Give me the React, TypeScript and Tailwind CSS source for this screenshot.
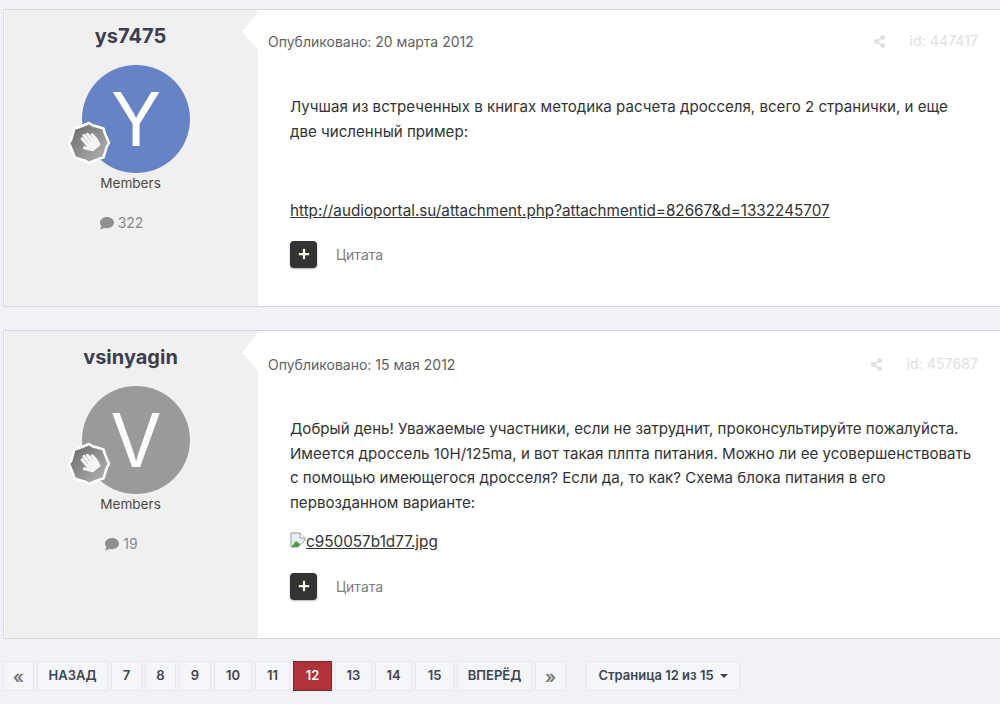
import { FaComment, FaHandPaper, FaPlus, FaShareAlt } from 'react-icons/fa'

const posts = [
  { name: 'ys7475', letter: 'Y', color: 'bg-[#6583c6]', count: '322', date: '20 марта 2012', id: '447417', headerTop: 'mt-[21px]', bodyTop: 'pt-[44px]' },
  { name: 'vsinyagin', letter: 'V', color: 'bg-[#9a9a9a]', count: '19', date: '15 мая 2012', id: '457687', headerTop: 'mt-[23px]', bodyTop: 'pt-[43px]' },
]

function RankBadge() {
  return (
    <div className="absolute left-[-15px] top-[56px] w-[44px] h-[44px]">
      <svg viewBox="0 0 44 44" className="w-full h-full">
        <defs>
          <linearGradient id="rank" x1="0" y1="0" x2="1" y2="1">
            <stop offset="0" stopColor="#666666" />
            <stop offset="1" stopColor="#b8b8b8" />
          </linearGradient>
        </defs>
        <path
          d="M22 2 Q25.5 5 30 5.5 L36.5 7.5 Q37.5 12 39 15 L42 22 Q39 25.5 38.5 30 L36.5 36.5 Q32 37.5 29 39 L22 42 Q18.5 39 14 38.5 L7.5 36.5 Q6.5 32 5 29 L2 22 Q5 18.5 5.5 14 L7.5 7.5 Q12 6.5 15 5 Z"
          fill="url(#rank)"
          stroke="#fff"
          strokeWidth="2.5"
          strokeLinejoin="round"
        />
      </svg>
      <FaHandPaper className="absolute left-[12px] top-[11px] w-[20px] h-[20px] text-[#f4f4f4] rotate-[-40deg]" />
    </div>
  )
}

function BrokenImage() {
  return (
    <svg viewBox="0 0 16 16" className="w-[16px] h-[16px] inline-block align-[-1px]">
      <path d="M1 1 H10 L15 6 V8 L8 15 H1 Z" fill="#e8eef7" stroke="#9a9a9a" strokeWidth="1" />
      <path d="M10 1 V6 H15" fill="#fff" stroke="#9a9a9a" strokeWidth="1" />
      <path d="M2 14 L6 9 L10 12 L8 15 H2 Z" fill="#4f9a3c" />
    </svg>
  )
}

function Post({ post, children }: { post: (typeof posts)[0]; children: React.ReactNode }) {
  return (
    <article className="relative h-full flex bg-white border border-[#d5d7dc] border-r-0 pl-px">
      <aside className="w-[253px] bg-[#f0f0f0] flex flex-col items-center pt-[12px] pr-[2px]">
        <h3 className="text-[20px] leading-[28px] font-bold text-[#3d3d4e]">{post.name}</h3>
        <div className={`relative mt-[15px] ml-[11px] w-[108px] h-[108px] rounded-full ${post.color} flex items-center justify-center text-white text-[74px] font-normal`}>
          {post.letter}
          <RankBadge />
        </div>
        <p className="text-[13.6px] leading-[20px] text-[#4a4a4a]">Members</p>
        <p className="mt-[20px] mr-[18px] flex items-center gap-[4px] text-[14px] leading-[20px] text-[#8a8a8a]">
          <FaComment className="w-[14px] h-[14px] text-[#8f8f8f]" />
          {post.count}
        </p>
      </aside>
      <div className="absolute left-[238px] top-[2px] w-[16px] h-[38px] bg-white [clip-path:polygon(100%_0,0_52%,100%_100%)]" />
      <div className="flex-1 min-w-0">
        <header className={`flex items-center h-[20px] ${post.headerTop} pl-[10px] pr-[22px] text-[14px] text-[#5f5f5f]`}>
          <span>Опубликовано: {post.date}</span>
          <FaShareAlt className="ml-auto w-[13px] h-[13px] text-[#e0e0e0]" />
          <span className="ml-[24px] text-[14.2px] text-[#e0e0e0]">id: {post.id}</span>
        </header>
        <div className={`pl-[32px] pr-[24px] ${post.bodyTop} text-[15.1px] leading-[24.6px] text-[#333]`}>{children}</div>
        <footer className="flex items-center pl-[32px] text-[14px] text-[#7d7d7d]">
          <span className="w-[27px] h-[27px] rounded-[4px] bg-[#333] shadow-[0_1px_2px_rgba(0,0,0,0.3)] flex items-center justify-center text-[#fffff0]">
            <FaPlus className="w-[12px] h-[12px]" />
          </span>
          <span className="ml-[19px]">Цитата</span>
        </footer>
      </div>
    </article>
  )
}

const btn = 'h-[30px] flex items-center justify-center bg-[#f5f6f9] border border-[#e6e8ee] text-[13px] font-semibold text-[#3f4450]'

export default function App() {
  return (
    <div className="w-[1000px] h-[704px] overflow-hidden bg-[#f0f2f7] pt-[9px] pl-[3px] font-['Inter',sans-serif]">
      <div className="h-[298px] mb-[23px]">
        <Post post={posts[0]}>
          <p>Лучшая из встреченных в книгах методика расчета дросселя, всего 2 странички, и еще две численный пример:</p>
          <p className="mt-[55px] text-[15.25px] underline">http://audioportal.su/attachment.php?attachmentid=82667&amp;d=1332245707</p>
          <div className="h-[17px]" />
        </Post>
      </div>
      <div className="h-[309px] mb-[22px]">
        <Post post={posts[1]}>
          <p>Добрый день! Уважаемые участники, если не затруднит, проконсультируйте пожалуйста. Имеется дроссель 10Н/125ma, и вот такая плпта питания. Можно ли ее усовершенствовать с помощью имеющегося дросселя? Если да, то как? Схема блока питания в его первозданном варианте:</p>
          <p className="mt-[15px] text-[15.3px] underline"><BrokenImage />c950057b1d77.jpg</p>
          <div className="h-[18px]" />
        </Post>
      </div>
      <nav className="flex items-center gap-[3px]">
        <span className={`${btn} w-[31px] text-[#777] text-[18px]`}>«</span>
        <span className={`${btn} w-[71px] uppercase`}>Назад</span>
        <span className={`${btn} w-[31px]`}>7</span>
        <span className={`${btn} w-[31px]`}>8</span>
        <span className={`${btn} w-[32px]`}>9</span>
        <span className={`${btn} w-[38px]`}>10</span>
        <span className={`${btn} w-[35px]`}>11</span>
        <span className={`${btn} w-[39px] !bg-[#b1323a] !border-[#7a2a2e] !text-white`}>12</span>
        <span className={`${btn} w-[37px]`}>13</span>
        <span className={`${btn} w-[37px]`}>14</span>
        <span className={`${btn} w-[39px]`}>15</span>
        <span className={`${btn} w-[75px] uppercase`}>Вперёд</span>
        <span className={`${btn} w-[31px] text-[#777] text-[18px]`}>»</span>
        <span className={`${btn} ml-[17px] w-[154px] gap-[6px]`}>
          Страница 12 из 15
          <span className="w-0 h-0 border-x-[4px] border-x-transparent border-t-[4px] border-t-[#444]" />
        </span>
      </nav>
    </div>
  )
}
